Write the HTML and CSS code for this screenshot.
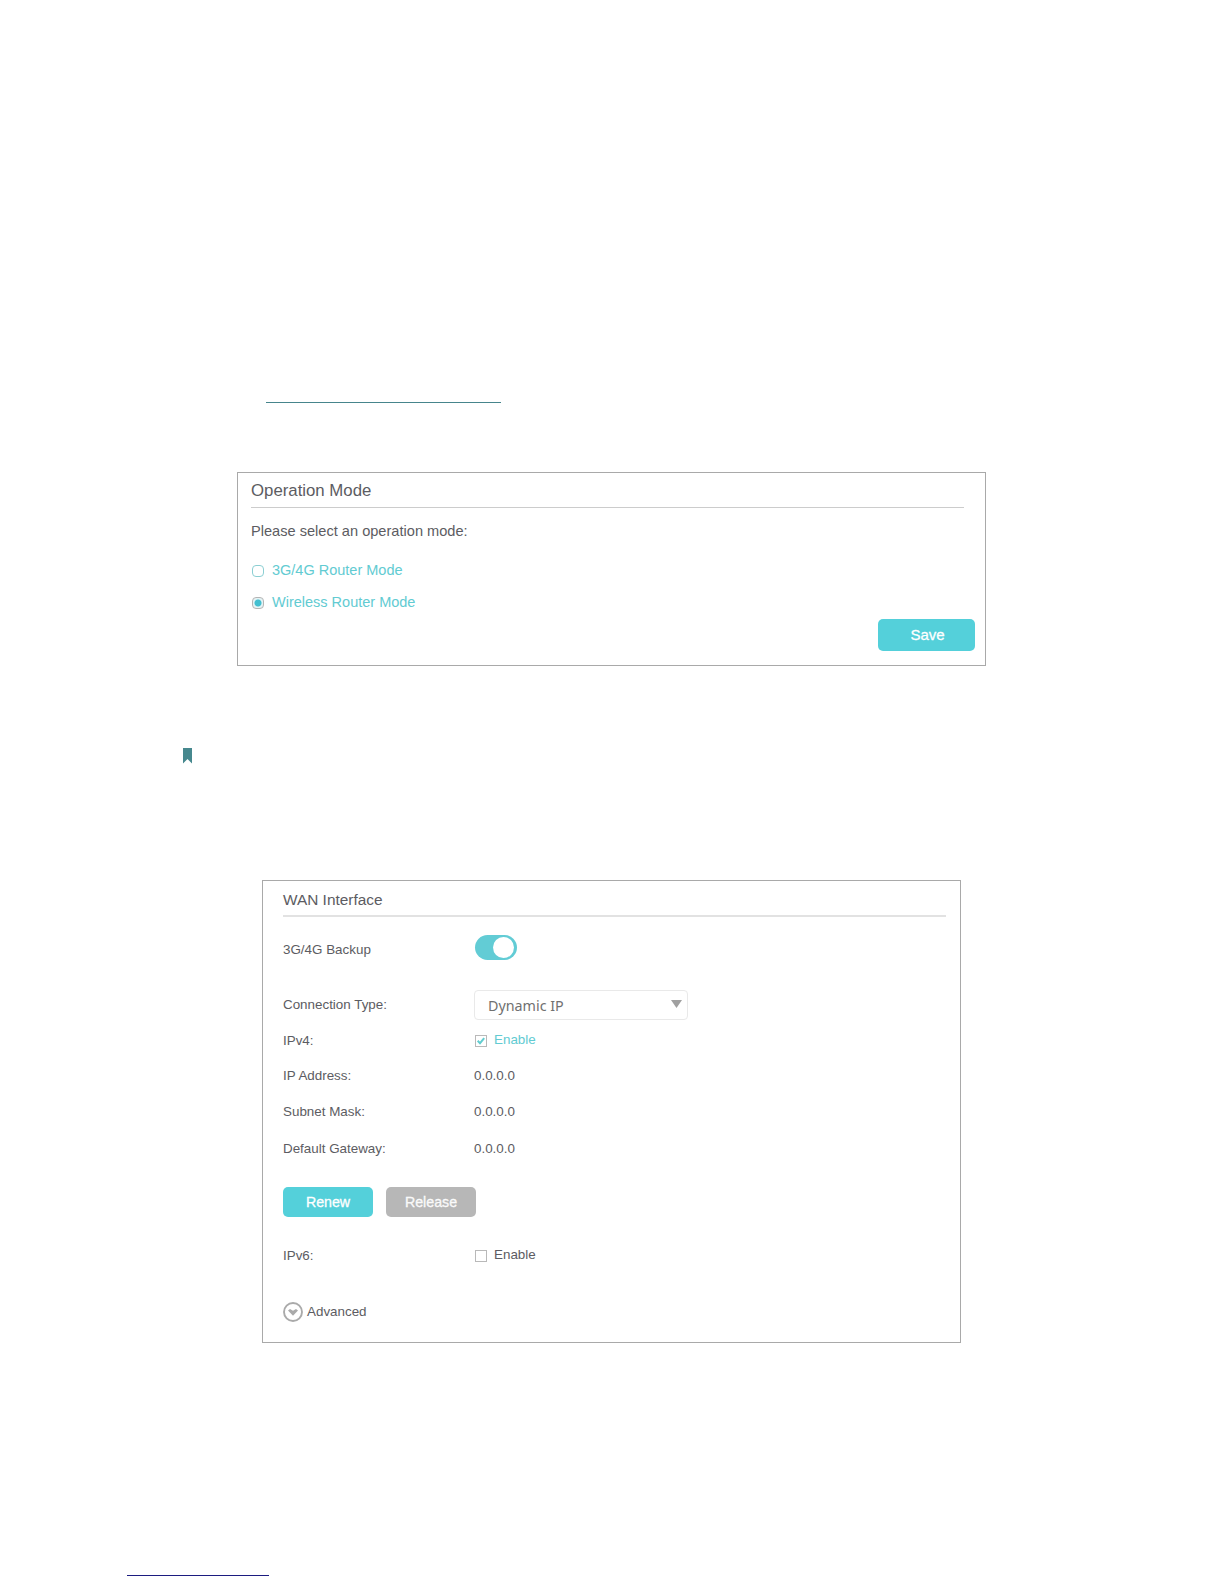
FILE: index.html
```html
<!DOCTYPE html>
<html lang="en">
<head>
	<meta charset="UTF-8">
	<title>Operation Mode</title>
	<link rel="stylesheet" href="styles.css">
</head>
<body>
	<div class="link-line"></div>

	<div class="panel mode">
		<h2>Operation Mode</h2>
		<p class="prompt">Please select an operation mode:</p>
		<label class="option"><i class="radio"></i>3G/4G Router Mode</label>
		<label class="option"><i class="radio checked"></i>Wireless Router Mode</label>
		<button class="btn save">Save</button>
	</div>

	<svg class="bookmark" width="9" height="16" viewBox="0 0 9 16"><path d="M0 0h9v15.5L4.5 11 0 15.5z" fill="#46888e"/></svg>

	<div class="panel wan">
		<h2>WAN Interface</h2>
		<div class="row backup">
			<span>3G/4G Backup</span>
			<span class="switch"></span>
		</div>
		<div class="row type">
			<span>Connection Type:</span>
			<div class="select">Dynamic IP
				<svg width="11" height="8" viewBox="0 0 11 8"><path d="M0 0h11L5.5 8z" fill="#a0a0a0"/></svg>
			</div>
		</div>
		<div class="row enable">
			<span>IPv4:</span>
			<label class="on"><i class="check"><svg width="10" height="10" viewBox="0 0 10 10"><path d="M1.7 4.8l2.3 2.4 4.2-5" fill="none" stroke="#62cdd0" stroke-width="2"/></svg></i><span>Enable</span></label>
		</div>
		<div class="values">
			<div class="row"><span>IP Address:</span><span>0.0.0.0</span></div>
			<div class="row"><span>Subnet Mask:</span><span>0.0.0.0</span></div>
			<div class="row"><span>Default Gateway:</span><span>0.0.0.0</span></div>
		</div>
		<div class="buttons">
			<button class="btn">Renew</button>
			<button class="btn gray">Release</button>
		</div>
		<div class="row enable">
			<span>IPv6:</span>
			<label><i class="check"></i><span>Enable</span></label>
		</div>
		<div class="advanced">
			<svg width="20" height="20" viewBox="0 0 20 20">
				<circle cx="10" cy="10" r="9" fill="none" stroke="#aaa" stroke-width="1.9"/>
				<path d="M5 8.6L7 7l3 1.7L13 7l2 1.6-5 5.2z" fill="#aaa"/>
			</svg>
			<span>Advanced</span>
		</div>
	</div>

	<div class="footer-line"></div>
</body>
</html>
```
FILE: styles.css
```css
body{margin:0;height:1584px;overflow:hidden;background:#fff;color:#5c5c62;font-family:"Liberation Sans",Arial,sans-serif;display:flow-root;}
h2,p{margin:0;font-weight:normal;}
.link-line{width:235px;height:1px;margin:402px 0 0 266px;background:#46858c;}
.footer-line{width:142px;height:1px;margin:232px 0 0 127px;background:#1c1c80;}
.bookmark{display:block;margin:82px 0 0 183px;}

.panel{box-sizing:border-box;border:1px solid #a9a9a9;}
.btn{display:block;padding:0;border:0;border-radius:5px;background:#54d0da;color:#fff;font-family:inherit;-webkit-text-stroke:.3px #fff;}
.btn.gray{background:#b7b7b7;color:#f6f6f6;}

/* operation mode */
.mode{width:749px;height:194px;margin:69px 0 0 237px;padding-left:13px;font-size:14.5px;}
.mode h2{width:713px;height:34px;border-bottom:1px solid #ccc;line-height:36px;font-size:16.8px;}
.prompt{height:46px;line-height:46px;font-size:14.6px;}
.option{display:flex;align-items:center;height:32px;color:#62cbd2;}
.radio{box-sizing:border-box;width:12px;height:12px;margin:2px 8px 0 1px;border:1px solid #8ccfd3;border-radius:4px;}
.radio.checked{border-color:#b5b5b5;background:radial-gradient(circle,#42bfd0 3px,#e4f3f5 4px);}
.save{width:97px;height:32px;margin:1px 10px 0 auto;padding:0 0 2px 2px;font-size:15px;}

/* wan interface */
.wan{width:699px;height:463px;margin:116px 0 0 262px;padding-left:20px;font-size:13.4px;}
.wan h2{width:663px;height:34px;border-bottom:2px solid #e2e2e2;line-height:37px;font-size:15.4px;}
.row{display:grid;grid-template-columns:191px 1fr;align-items:center;}
.backup{height:65px;}
.switch{box-sizing:border-box;width:42px;height:25px;margin:0 0 4px 1px;padding:2px;border-radius:13px;background:#62ccd5;}
.switch::after{content:"";display:block;width:21px;height:21px;margin-left:16px;border-radius:50%;background:#fff;}
.type{height:46px;}
.type > span{margin-bottom:2px;}
.select{box-sizing:border-box;display:flex;align-items:center;justify-content:space-between;width:214px;height:30px;padding:0 5px 0 13px;border:1px solid #e9e9e9;border-radius:4px;font-family:"Noto Sans",sans-serif;font-size:14.3px;color:#707070;}
.select svg{margin-bottom:2px;}
.enable{height:25px;}
.enable label{display:flex;align-items:center;}
.enable label span{margin-bottom:2px;}
.on{color:#62cbd2;}
.check{box-sizing:border-box;width:12px;height:12px;margin:1px 7px 0 1px;border:1px solid #b9b9b9;}
.check svg{display:block;}
.values{margin-top:4px;}
.values .row{height:36.5px;}
.buttons{display:flex;gap:13px;margin:20.5px 0 26px;}
.buttons .btn{width:90px;height:30px;font-size:14.2px;}
.advanced{display:flex;align-items:center;gap:4px;height:20px;margin-top:34px;}
.advanced span{margin-bottom:2px;}
```
